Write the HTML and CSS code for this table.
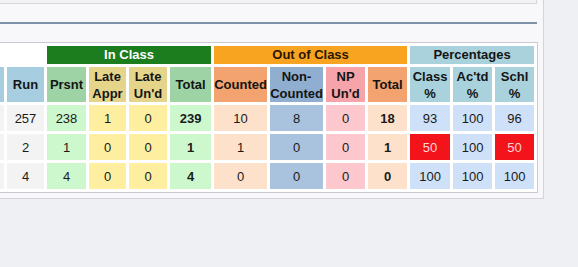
FILE: index.html
```html
<!DOCTYPE html>
<html>
<head>
<meta charset="utf-8">
<link rel="stylesheet" href="styles.css">
</head>
<body>
<div class="panel">
  <div class="topbox"></div>
  <div class="rule"></div>
  <table class="grid">
    <colgroup>
      <col class="w36"><col class="w37"><col class="w39"><col class="w37"><col class="w38"><col class="w41">
      <col class="w53"><col class="w53"><col class="w39"><col class="w39">
      <col class="w40"><col class="w39"><col class="w39">
    </colgroup>
    <tr class="r-group">
      <th colspan="2" class="blank"></th>
      <th colspan="4" class="g-in">In Class</th>
      <th colspan="4" class="g-out">Out of Class</th>
      <th colspan="3" class="g-pct">Percentages</th>
    </tr>
    <tr class="r-head">
      <th class="h-blue"></th>
      <th class="h-blue">Run</th>
      <th class="h-green">Prsnt</th>
      <th class="h-khaki">Late<br>Appr</th>
      <th class="h-khaki">Late<br>Un'd</th>
      <th class="h-green">Total</th>
      <th class="h-orange">Counted</th>
      <th class="h-steel">Non-<br>Counted</th>
      <th class="h-pink">NP<br>Un'd</th>
      <th class="h-orange">Total</th>
      <th class="h-pct">Class<br>%</th>
      <th class="h-pct">Ac'td<br>%</th>
      <th class="h-pct">Schl<br>%</th>
    </tr>
    <tr class="r-data">
      <td class="d-gray"></td>
      <td class="d-gray">257</td>
      <td class="d-green">238</td>
      <td class="d-yellow">1</td>
      <td class="d-yellow">0</td>
      <td class="d-green bold">239</td>
      <td class="d-peach">10</td>
      <td class="d-steel">8</td>
      <td class="d-pink">0</td>
      <td class="d-peach bold">18</td>
      <td class="d-pct">93</td>
      <td class="d-pct">100</td>
      <td class="d-pct">96</td>
    </tr>
    <tr class="r-data">
      <td class="d-gray"></td>
      <td class="d-gray">2</td>
      <td class="d-green">1</td>
      <td class="d-yellow">0</td>
      <td class="d-yellow">0</td>
      <td class="d-green bold">1</td>
      <td class="d-peach">1</td>
      <td class="d-steel">0</td>
      <td class="d-pink">0</td>
      <td class="d-peach bold">1</td>
      <td class="d-red">50</td>
      <td class="d-pct">100</td>
      <td class="d-red">50</td>
    </tr>
    <tr class="r-data">
      <td class="d-gray"></td>
      <td class="d-gray">4</td>
      <td class="d-green">4</td>
      <td class="d-yellow">0</td>
      <td class="d-yellow">0</td>
      <td class="d-green bold">4</td>
      <td class="d-peach">0</td>
      <td class="d-steel">0</td>
      <td class="d-pink">0</td>
      <td class="d-peach bold">0</td>
      <td class="d-pct">100</td>
      <td class="d-pct">100</td>
      <td class="d-pct">100</td>
    </tr>
  </table>
</div>
</body>
</html>
```
FILE: styles.css
```css
html, body {
  margin: 0;
  padding: 0;
}
body {
  background: #eff0f4;
  font-family: "Liberation Sans", Arial, sans-serif;
  color: #1a1a1a;
  overflow: hidden;
}
.panel {
  width: 543px;
  height: 198px;
  box-sizing: content-box;
  background: #f8f8fa;
  border-right: 1px solid #d3d4d9;
  border-bottom: 1px solid #d3d4d9;
}
.topbox {
  width: 536px;
  height: 3px;
  background: #f2f2f4;
  border-right: 1px solid #d6d7db;
  border-bottom: 1px solid #d6d7db;
}
.rule {
  width: 537px;
  height: 2px;
  margin-top: 18px;
  background: #7e92a8;
}
.grid {
  margin-top: 18px;
  margin-left: -36px;
  table-layout: fixed;
  width: 574px;
  border-collapse: separate;
  border-spacing: 3px;
  border: 1px solid #c9cbd0;
  background: #ffffff;
  font-size: 13px;
}
.w36 { width: 36px; }
.w37 { width: 37px; }
.w38 { width: 38px; }
.w39 { width: 39px; }
.w40 { width: 40px; }
.w41 { width: 41px; }
.w53 { width: 53px; }
.grid th, .grid td {
  padding: 0;
  text-align: center;
  vertical-align: middle;
  white-space: nowrap;
  overflow: hidden;
}
.grid th {
  font-weight: bold;
  line-height: 17px;
  color: #141414;
}
.r-group th { height: 18px; line-height: 16px; }
.r-head th { height: 35px; }
.r-data td { height: 26px; }
.blank { background: transparent; }
.grid .g-in { background: #1b7d1e; color: #ffffff; }
.grid .g-out { background: #f9a420; color: #2a1600; }
.g-pct { background: #a9d2dc; }
.h-blue { background: #a7cde0; }
.h-green { background: #9ed3a6; }
.h-khaki { background: #e5d58b; }
.h-orange { background: #f2a36f; }
.h-steel { background: #8faed0; }
.h-pink { background: #f6a3aa; }
.h-pct { background: #a9d2dc; }
.d-gray { background: #f3f3f4; }
.d-green { background: #cdf8cd; }
.d-yellow { background: #fdef9f; }
.d-peach { background: #fde1ca; }
.d-steel { background: #a9c3df; }
.d-pink { background: #fdc8cd; }
.d-pct { background: #cfe1f8; }
.d-red { background: #f2141a; color: #ffd6d6; }
.bold { font-weight: bold; }
```
